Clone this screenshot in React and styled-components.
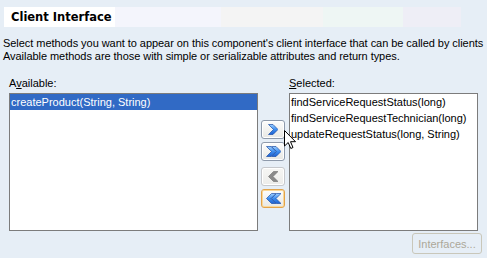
import React from 'react';
import styled, { createGlobalStyle } from 'styled-components';

const available = ['createProduct(String, String)'];
const selected = [
  'findServiceRequestStatus(long)',
  'findServiceRequestTechnician(long)',
  'updateRequestStatus(long, String)',
];

const Chevron = ({ x = 0, dir = 'right', fill }) => {
  const pts = dir === 'right'
    ? '0,0 4.5,0 9.5,5 4.5,10 0,10 5,5'
    : '9.5,0 5,0 0,5 5,10 9.5,10 4.5,5';
  return <polygon points={pts} transform={`translate(${x} 0)`} fill={fill} stroke={fill === '#8a8a8a' ? '#7a7a7a' : '#1d4fa8'} strokeWidth="0.7" strokeLinejoin="round" />;
};

const ArrowIcon = ({ dir, double, disabled }) => {
  const fill = disabled ? '#8a8a8a' : 'url(#chev)';
  const w = double ? 15 : 10;
  return (
    <svg width={w} height="11" viewBox={`-0.5 -0.5 ${w} 11`}>
      <defs>
        <linearGradient id="chev" x1="0" y1="0" x2="0" y2="1">
          <stop offset="0" stopColor="#9fd0ff" />
          <stop offset="0.5" stopColor="#3d8ef0" />
          <stop offset="1" stopColor="#1f62d0" />
        </linearGradient>
      </defs>
      <Chevron x={0} dir={dir} fill={fill} />
      {double && <Chevron x={5} dir={dir} fill={fill} />}
    </svg>
  );
};

const Cursor = () => (
  <CursorWrap>
    <svg width="13" height="20" viewBox="0 0 13 20">
      <path d="M0.5 0.5 L0.5 16 L4.2 12.5 L6.8 18.5 L9 17.5 L6.5 11.7 L11.5 11.7 Z" fill="#fff" stroke="#000" strokeWidth="1" strokeLinejoin="miter" />
    </svg>
  </CursorWrap>
);

export default function App() {
  return (
    <Page>
      <GlobalStyle />
      <TitleBar>Client Interface</TitleBar>
      <Description>
        Select methods you want to appear on this component's client interface that can be called by clients
        <br />
        Available methods are those with simple or serializable attributes and return types.
      </Description>

      <Shuttle>
        <Label>A<u>v</u>ailable:</Label>
        <span />
        <Label><u>S</u>elected:</Label>

        <List>
          {available.map((m, i) => (
            <Item key={m} selected={i === 0}>{m}</Item>
          ))}
        </List>

        <ButtonColumn>
          <ShuttleButton><ArrowIcon dir="right" /></ShuttleButton>
          <ShuttleButton><ArrowIcon dir="right" double /></ShuttleButton>
          <ShuttleButton disabled spaced><ArrowIcon dir="left" disabled /></ShuttleButton>
          <ShuttleButton focused><ArrowIcon dir="left" double /></ShuttleButton>
        </ButtonColumn>

        <List>
          {selected.map(m => (
            <Item key={m}>{m}</Item>
          ))}
        </List>
      </Shuttle>

      <Footer>
        <DisabledButton>Interfaces...</DisabledButton>
      </Footer>

      <Cursor />
    </Page>
  );
}

const GlobalStyle = createGlobalStyle`
  body {
    margin: 0;
    background: #e6eef6;
    font-family: "Liberation Sans", Arial, sans-serif;
    font-size: 11px;
    color: #000;
  }
`;

const Page = styled.div`
  position: relative;
  width: 487px;
  height: 258px;
  box-sizing: border-box;
  padding: 7px 5px 0 3px;
`;

const TitleBar = styled.div`
  margin-left: 1px;
  width: 457px;
  height: 20px;
  box-sizing: border-box;
  padding-left: 7px;
  display: flex;
  align-items: center;
  font-family: "DejaVu Sans", sans-serif;
  font-weight: bold;
  font-size: 11.5px;
  background: linear-gradient(to right,
    #ffffff 0 111px,
    #f4f5fc 111px 217px,
    #f4f4f4 217px 319px,
    #eef6f4 319px 399px,
    #eeeef6 399px 100%);
`;

const Description = styled.p`
  margin: 10px 0 0;
  line-height: 13px;
  letter-spacing: -0.05px;
  white-space: nowrap;
`;

const Shuttle = styled.div`
  display: grid;
  grid-template-columns: 249px 31px 189px;
  grid-template-rows: 13px 138px;
  row-gap: 3px;
  margin: 14px 0 0 6px;
`;

const Label = styled.div`
  line-height: 13px;
  u { text-decoration: underline; }
`;

const List = styled.div`
  background: #fff;
  border: 1px solid #7c7c7c;
  box-sizing: border-box;
  overflow: hidden;
`;

const Item = styled.div`
  height: 16px;
  line-height: 16px;
  padding-left: 1px;
  white-space: nowrap;
  background: ${p => (p.selected ? '#316ac5' : 'transparent')};
  color: ${p => (p.selected ? '#fff' : '#000')};
`;

const ButtonColumn = styled.div`
  display: flex;
  flex-direction: column;
  gap: 3px;
  padding: 27px 0 0 3px;
`;

const ShuttleButton = styled.div`
  width: 24px;
  height: 19px;
  box-sizing: border-box;
  margin-top: ${p => (p.spaced ? '3px' : '0')};
  border-radius: 3px;
  display: flex;
  align-items: center;
  justify-content: center;
  border: 1px solid ${p => (p.focused ? '#e2a34a' : p.disabled ? '#c6c8cc' : '#8e9aab')};
  box-shadow: ${p => (p.focused ? 'inset 0 0 0 1px #fbd897' : 'inset 0 0 0 1px #fff')};
  background: ${p => (p.disabled
    ? 'linear-gradient(#f6f6f4, #ececea)'
    : 'linear-gradient(#fdfdfc, #e8e8e4)')};
`;

const Footer = styled.div`
  display: flex;
  justify-content: flex-end;
  margin-top: 2px;
`;

const DisabledButton = styled.div`
  width: 70px;
  height: 21px;
  box-sizing: border-box;
  border: 1px solid #c9c7ba;
  border-radius: 3px;
  color: #aca899;
  display: flex;
  align-items: center;
  justify-content: center;
  padding-top: 1px;
`;

const CursorWrap = styled.div`
  position: absolute;
  left: 284px;
  top: 130px;
  line-height: 0;
`;
